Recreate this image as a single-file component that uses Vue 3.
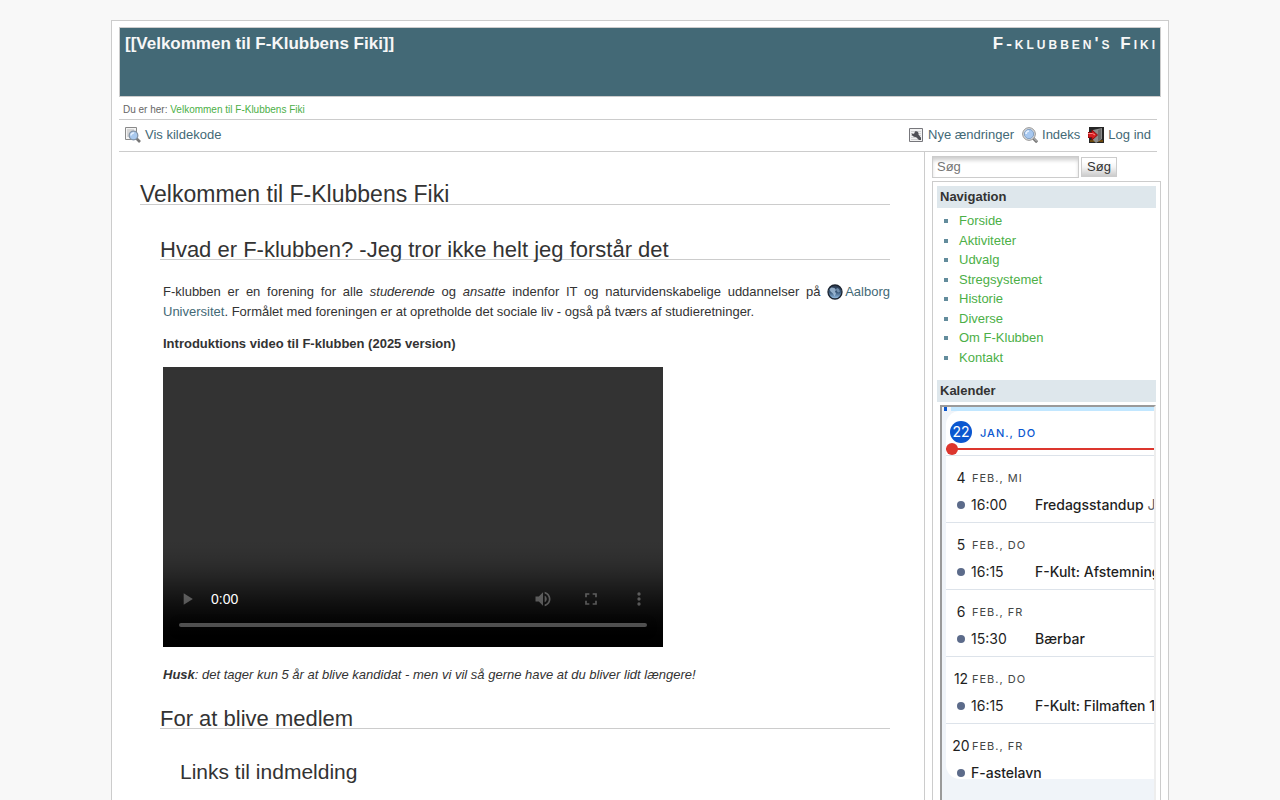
<script setup>
import { ref } from "vue";

const search = ref("");

const navigation = [
  "Forside",
  "Aktiviteter",
  "Udvalg",
  "Stregsystemet",
  "Historie",
  "Diverse",
  "Om F-Klubben",
  "Kontakt",
];

const days = [
  { day: 4, label: "Feb., Mi", time: "16:00", title: "Fredagsstandup", place: "J" },
  { day: 5, label: "Feb., Do", time: "16:15", title: "F-Kult: Afstemning" },
  { day: 6, label: "Feb., Fr", time: "15:30", title: "Bærbar" },
  { day: 12, label: "Feb., Do", time: "16:15", title: "F-Kult: Filmaften 1" },
  { day: 20, label: "Feb., Fr", title: "F-astelavn" },
];
</script>

<template>
  <div class="page">
    <header class="header">
      <a href="#" class="pagename">[[Velkommen til F-Klubbens Fiki]]</a>
      <a href="#" class="logo">F-klubben's Fiki</a>
    </header>

    <nav class="breadcrumbs">
      Du er her: <a href="#">Velkommen til F-Klubbens Fiki</a>
    </nav>

    <div class="bar">
      <a href="#" class="action">
        <svg width="16" height="16" viewBox="0 0 16 16">
          <path d="M.5.5h11v12H.5z" fill="#f4f4f4" stroke="#8a8a8a" />
          <path d="M2 3h7M2 5h4M2 7h3M2 9h3" stroke="#b8b8b8" />
          <path d="M11.5 11.5l3.5 3.5" stroke="#777" stroke-width="2.6" />
          <circle cx="8.5" cy="8.5" r="4.300" fill="#a9c9ee" stroke="#8394a8" stroke-width="1.300" />
          <path d="M6 8.500a2.500 2.500 0 0 1 3-2.400" fill="none" stroke="#e6f1ff" stroke-width="1.500" />
        </svg>
        Vis kildekode
      </a>
      <div class="actions">
        <a href="#" class="action">
          <svg width="16" height="16" viewBox="0 0 16 16">
            <path d="M1.500 1.500h13v13h-13z" fill="#f2f2f2" stroke="#77777c" />
            <path d="M3 4.500h10M3 6.500h10M3 8.500h10M3 10.500h10M3 12.500h10" stroke="#d0d0d0" />
            <path d="M3.500 6.500l2.500.5 1-2.500c2.500-.6 4 1 3.500 3l2.500 3.300v2.200h-2l-3-3c-2 .5-4.200-1.200-4.500-3.500z" fill="#505055" />
          </svg>
          Nye ændringer
        </a>
        <a href="#" class="action">
          <svg width="16" height="16" viewBox="0 0 16 16">
            <path d="M10.500 10.500l4.700 4.700" stroke="#777" stroke-width="3" />
            <path d="M11 10.500l4 4" stroke="#ccc" />
            <circle cx="7" cy="7" r="6.300" fill="#eee" stroke="#8a8a8a" />
            <circle cx="7" cy="7" r="4.700" fill="#a7c8f0" stroke="#7f9dc0" />
            <path d="M4 7A3 3 0 0 1 7 4" fill="none" stroke="#e6f1ff" stroke-width="1.700" />
          </svg>
          Indeks
        </a>
        <a href="#" class="action">
          <svg width="16" height="16" viewBox="0 0 16 16">
            <path d="M1 0h15v16H1z" fill="#262626" />
            <path d="M2 13h13v2H2z" fill="#6b470c" />
            <path d="M14 1v11l-6 4-3-3V3z" fill="#8c8c8c" />
            <path d="M13 2v10l-3 2V3z" fill="#6b6b6b" />
            <path d="M0 5.500h4V3l5.500 5L4 13v-2.500H0z" fill="#d81f22" stroke="#8d0b0d" />
            <path d="M0 6.500h4.500L7 8" fill="none" stroke="#ff8585" />
          </svg>
          Log ind
        </a>
      </div>
    </div>

    <div class="columns">
      <main class="content">
        <h1>Velkommen til F-Klubbens Fiki</h1>
        <section class="level2">
          <h2>Hvad er F-klubben? -Jeg tror ikke helt jeg forstår det</h2>
          <div class="text">
            <p>
              F-klubben er en forening for alle <em>studerende</em> og <em>ansatte</em> indenfor IT og
              naturvidenskabelige uddannelser på
              <a href="#" class="external"><svg width="16" height="16" viewBox="0 0 16 16">
                <defs>
                  <linearGradient id="globe" x1="0" y1="0" x2="0" y2="1">
                    <stop offset="0" stop-color="#2b3a50" />
                    <stop offset=".5" stop-color="#365575" />
                    <stop offset="1" stop-color="#9cc6ee" />
                  </linearGradient>
                </defs>
                <circle cx="8" cy="8" r="7" fill="url(#globe)" stroke="#1c2430" stroke-width="1.300" />
                <path d="M2.500 5l2-1.500 3 .5 1.500 2-1 1.500 1 2-1.500 3-1.500-3-2.500-2z" fill="#a9c4df" opacity=".8" />
                <path d="M10 4l2 1 1 2.500-1.500 1-1.500-1-1-2z" fill="#8caac9" opacity=".7" />
              </svg>Aalborg Universitet</a>. Formålet med foreningen er at opretholde det sociale liv - også
              på tværs af studieretninger.
            </p>
            <p><strong>Introduktions video til F-klubben (2025 version)</strong></p>
            <video class="video" controls width="500" height="280"></video>
            <p>
              <em><strong>Husk</strong>: det tager kun 5 år at blive kandidat - men vi vil så gerne have at du bliver lidt længere!</em>
            </p>
          </div>
          <h2>For at blive medlem</h2>
          <h3>Links til indmelding</h3>
        </section>
      </main>

      <aside class="sidebar">
        <form class="search" @submit.prevent>
          <input v-model="search" type="text" placeholder="Søg" aria-label="Søg" />
          <button type="submit">Søg</button>
        </form>

        <div class="box">
          <h4>Navigation</h4>
          <ul>
            <li v-for="item in navigation" :key="item">
              <a href="#">{{ item }}</a>
            </li>
          </ul>
          <h4>Kalender</h4>
          <div class="calendar">
            <div class="strip"></div>
            <div class="agenda">
              <div class="today">
                <span class="today-number">22</span>
                <span class="month">Jan., Do</span>
                <div class="now"></div>
              </div>
              <div v-for="d in days" :key="d.day" class="day">
                <div class="date">
                  <span class="number">{{ d.day }}</span>
                  <span class="month">{{ d.label }}</span>
                </div>
                <div class="event">
                  <span class="dot"></span>
                  <span v-if="d.time" class="time">{{ d.time }}</span>
                  <span class="title">{{ d.title }}</span>
                  <span v-if="d.place" class="place">{{ d.place }}</span>
                </div>
              </div>
            </div>
          </div>
        </div>
      </aside>
    </div>
  </div>
</template>

<style>
body {
  background: #f8f8f8;
}

#app {
  padding-top: 20px;
}
</style>

<style scoped>
* {
  box-sizing: border-box;
}

.page {
  display: flex;
  flex-direction: column;
  min-height: calc(100vh - 20px);
  margin: 0 111px;
  border: 1px solid #ccc;
  border-bottom: none;
  padding: 6px 7px 0;
  background: #fff;
  color: #333;
  font-family: "Liberation Sans", Arial, sans-serif;
  font-size: 13px;
  line-height: 1.5;
}

a {
  color: #436976;
  text-decoration: none;
}

.header {
  display: flex;
  justify-content: space-between;
  height: 70px;
  padding: 3px 2px 0 5px;
  border: 1px solid #ccc;
  background: #436976;
  font-size: 17px;
  font-weight: bold;
}

.header a {
  color: #f7f7f7;
}

.logo {
  font-variant: small-caps;
  letter-spacing: 3px;
}

.breadcrumbs {
  height: 23px;
  margin-right: 4px;
  padding: 0 4px;
  border-bottom: 1px solid #ccc;
  color: #666;
  font-size: 10px;
  line-height: 25px;
}

.breadcrumbs a,
.box a {
  color: #4caf47;
}

.bar {
  display: flex;
  justify-content: space-between;
  height: 32px;
  margin-right: 4px;
  padding: 0 6px 2px;
  border-bottom: 1px solid #ccc;
}

.actions {
  display: flex;
  gap: 8px;
}

.action {
  display: flex;
  align-items: center;
  gap: 4px;
}

.columns {
  display: flex;
  flex: 1;
}

.content {
  flex: 1;
  padding: 32px 34px 18px 21px;
  border-right: 1px solid #ccc;
}

h1,
h2,
h3,
h4,
p,
ul {
  margin: 0;
  padding: 0;
}

h1,
h2,
h3 {
  font-weight: normal;
  line-height: 20px;
}

h1,
h2 {
  border-bottom: 1px solid #ccc;
}

h1 {
  margin-bottom: 36px;
  font-size: 23px;
}

h2 {
  margin-bottom: 22px;
  font-size: 22px;
  line-height: 18px;
}

h3 {
  margin: 33px 0 0 20px;
  font-size: 21px;
}

.level2 {
  margin-left: 20px;
}

.text {
  margin-left: 3px;
  padding-bottom: 26px;
}

.text p {
  margin-bottom: 13px;
  text-align: justify;
}

.text p:last-child {
  margin-bottom: 0;
}

.external svg {
  height: 16px;
  margin-right: 2px;
  vertical-align: -4px;
}

.video {
  display: block;
  max-width: 100%;
  margin-bottom: 18px;
}

.video::-webkit-media-controls-current-time-display {
  font-family: "Liberation Sans", Arial, sans-serif;
}

.sidebar {
  display: flex;
  flex-direction: column;
  width: 236px;
  padding: 4px 0 0 7px;
}

.search {
  display: flex;
  align-items: center;
  gap: 2px;
  margin-bottom: 3px;
}

.search input {
  width: 147px;
  height: 22px;
  padding: 0 4px 2px;
  border: 1px solid #ccc;
  background: #fff;
  box-shadow: inset 0 4px 4px -1px #ccc;
  font: inherit;
}

.search input::placeholder {
  color: #757575;
}

.search button {
  width: 36px;
  height: 20px;
  padding: 0;
  border: 1px solid #ccc;
  background: linear-gradient(#fff 20%, #f4f4f4 50%, #ccc);
  color: #333;
  font: inherit;
  line-height: 18px;
}

.box {
  display: flex;
  flex: 1;
  flex-direction: column;
  padding: 4px 4px 0;
  border: 1px solid #ccc;
  border-bottom: none;
}

h4 {
  height: 22px;
  padding-left: 3px;
  background: #dee7ec;
  font-size: 13px;
  line-height: 22px;
}

ul {
  margin: 3px 0 13px;
  padding-left: 22px;
  list-style: square;
}

li::marker {
  color: #638c9c;
}

/* agenda */
.calendar {
  flex: 1;
  margin: 3px 0 0 3px;
  border: 2px solid #9a9a9a;
  border-right-color: #eee;
  border-bottom: none;
  padding-left: 4px;
  overflow: hidden;
  background: #f0f4f9;
  color: #1f1f1f;
  font-family: Inter, sans-serif;
  font-size: 14px;
  line-height: 20px;
}

.strip {
  height: 4px;
  margin-left: -2px;
  border-left: 3px solid #0b57d0;
  background: linear-gradient(90deg, #f0f4f9 4px, #c2e7ff 4px);
}

.agenda {
  height: 368px;
  border-radius: 14px 0 0 14px;
  overflow: hidden;
  background: #fff;
  white-space: nowrap;
}

.today {
  position: relative;
  display: flex;
  align-items: flex-start;
  gap: 8px;
  height: 45px;
  padding: 10px 0 0 4px;
  border-bottom: 1px solid #dde3ea;
  color: #0b57d0;
}

.today-number {
  width: 22px;
  height: 22px;
  border-radius: 50%;
  background: #0b57d0;
  color: #fff;
  line-height: 22px;
  text-align: center;
}

.month {
  font-size: 11px;
  letter-spacing: 1px;
  line-height: 24px;
  text-transform: uppercase;
}

.today .month {
  font-weight: 500;
}

.now {
  position: absolute;
  left: 0;
  right: 0;
  bottom: 5px;
  height: 2px;
  background: #dc362e;
}

.now::before {
  content: "";
  position: absolute;
  top: -5px;
  left: 0;
  width: 12px;
  height: 12px;
  border-radius: 50%;
  background: #dc362e;
}

.day {
  height: 67px;
  padding-top: 10px;
  border-bottom: 1px solid #dde3ea;
}

.date,
.event {
  display: flex;
  align-items: center;
}

.date {
  height: 24px;
  padding-left: 4px;
}

.number {
  width: 22px;
  text-align: center;
}

.date .month {
  color: #444746;
}

.event {
  height: 30px;
  padding-left: 11px;
}

.dot {
  flex: none;
  width: 8px;
  height: 8px;
  margin-right: 6px;
  border-radius: 50%;
  background: #5c6b8a;
}

.time {
  flex: none;
  width: 64px;
}

.title {
  font-weight: 500;
}

.place {
  margin-left: 4px;
  color: #5f6368;
}
</style>
